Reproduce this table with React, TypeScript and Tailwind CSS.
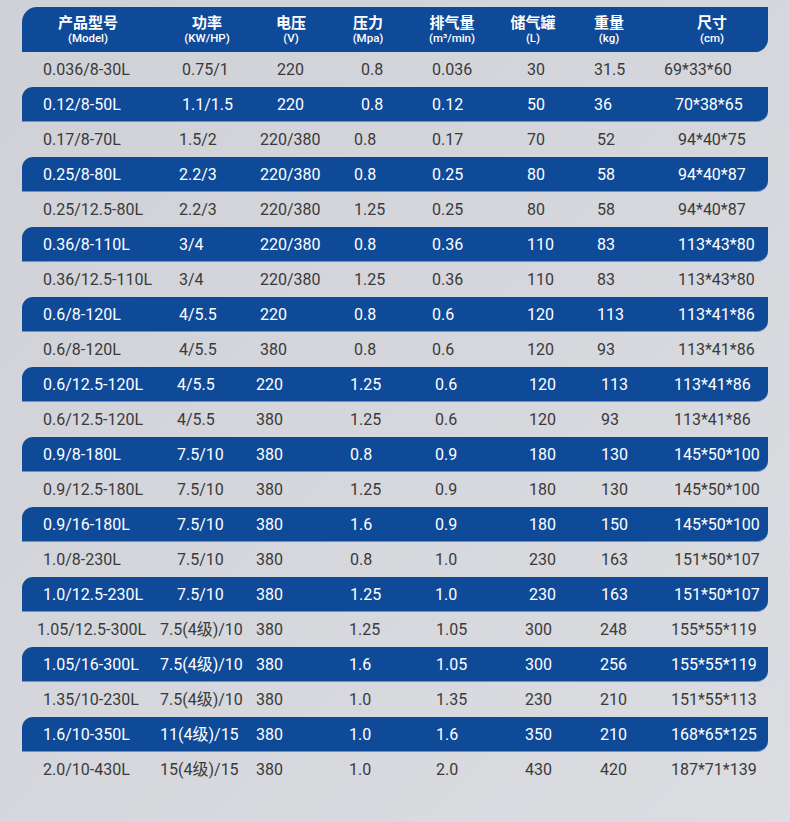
import React from "react";

type Row = { cells: string[]; blue: boolean; t: string; first?: string; last?: string };

const T1 = "grid-cols-[139px_95px_84px_71px_95px_67px_76px_1fr]";
const T2 = "grid-cols-[136px_81px_94px_78px_95px_70px_81px_1fr]";
const T3 = "grid-cols-[134px_79px_94px_85px_94px_72px_73px_1fr]";
const T4 = "grid-cols-[117px_96px_93px_87px_89px_75px_71px_1fr]";

const rows: Row[] = [
  { cells: ["0.036/8-30L", "0.75/1", "220", "0.8", "0.036", "30", "31.5", "69*33*60"], blue: false, t: T1, last: "-ml-[6px]" },
  { cells: ["0.12/8-50L", "1.1/1.5", "220", "0.8", "0.12", "50", "36", "70*38*65"], blue: true, t: T1, last: "ml-[5px]" },
  { cells: ["0.17/8-70L", "1.5/2", "220/380", "0.8", "0.17", "70", "52", "94*40*75"], blue: false, t: T2 },
  { cells: ["0.25/8-80L", "2.2/3", "220/380", "0.8", "0.25", "80", "58", "94*40*87"], blue: true, t: T2 },
  { cells: ["0.25/12.5-80L", "2.2/3", "220/380", "1.25", "0.25", "80", "58", "94*40*87"], blue: false, t: T2 },
  { cells: ["0.36/8-110L", "3/4", "220/380", "0.8", "0.36", "110", "83", "113*43*80"], blue: true, t: T2 },
  { cells: ["0.36/12.5-110L", "3/4", "220/380", "1.25", "0.36", "110", "83", "113*43*80"], blue: false, t: T2 },
  { cells: ["0.6/8-120L", "4/5.5", "220", "0.8", "0.6", "120", "113", "113*41*86"], blue: true, t: T2 },
  { cells: ["0.6/8-120L", "4/5.5", "380", "0.8", "0.6", "120", "93", "113*41*86"], blue: false, t: T2 },
  { cells: ["0.6/12.5-120L", "4/5.5", "220", "1.25", "0.6", "120", "113", "113*41*86"], blue: true, t: T3 },
  { cells: ["0.6/12.5-120L", "4/5.5", "380", "1.25", "0.6", "120", "93", "113*41*86"], blue: false, t: T3 },
  { cells: ["0.9/8-180L", "7.5/10", "380", "0.8", "0.9", "180", "130", "145*50*100"], blue: true, t: T3 },
  { cells: ["0.9/12.5-180L", "7.5/10", "380", "1.25", "0.9", "180", "130", "145*50*100"], blue: false, t: T3 },
  { cells: ["0.9/16-180L", "7.5/10", "380", "1.6", "0.9", "180", "150", "145*50*100"], blue: true, t: T3 },
  { cells: ["1.0/8-230L", "7.5/10", "380", "0.8", "1.0", "230", "163", "151*50*107"], blue: false, t: T3 },
  { cells: ["1.0/12.5-230L", "7.5/10", "380", "1.25", "1.0", "230", "163", "151*50*107"], blue: true, t: T3 },
  { cells: ["1.05/12.5-300L", "7.5(4级)/10", "380", "1.25", "1.05", "300", "248", "155*55*119"], blue: false, t: T4, first: "-ml-[6px]" },
  { cells: ["1.05/16-300L", "7.5(4级)/10", "380", "1.6", "1.05", "300", "256", "155*55*119"], blue: true, t: T4 },
  { cells: ["1.35/10-230L", "7.5(4级)/10", "380", "1.0", "1.35", "230", "210", "151*55*113"], blue: false, t: T4 },
  { cells: ["1.6/10-350L", "11(4级)/15", "380", "1.0", "1.6", "350", "210", "168*65*125"], blue: true, t: T4 },
  { cells: ["2.0/10-430L", "15(4级)/15", "380", "1.0", "2.0", "430", "420", "187*71*139"], blue: false, t: T4 },
];

const headers: [string, string][] = [
  ["产品型号", "(Model)"],
  ["功率", "(KW/HP)"],
  ["电压", "(V)"],
  ["压力", "(Mpa)"],
  ["排气量", "(m³/min)"],
  ["储气罐", "(L)"],
  ["重量", "(kg)"],
  ["尺寸", "(cm)"],
];

const FONT = "font-['Roboto','Noto_Sans_CJK_SC',sans-serif]";

export default function App() {
  return (
    <div
      className={`w-[790px] h-[822px] overflow-hidden bg-gradient-to-br from-[#cfd1d6] via-[#d5d7dc] to-[#dcdde1] pt-[7px] ${FONT}`}
    >
      <div className="ml-[22px] w-[746px]">
        <div className="h-[45px] bg-[#0f4a98] rounded-tl-[15px] rounded-br-[13px] grid grid-cols-[132px_106px_62px_92px_76px_86px_66px_1fr] text-white">
          {headers.map(([zh, en], i) => (
            <div
              key={i}
              className={`flex flex-col items-center justify-center ${i === 7 ? "pl-[14px]" : ""}`}
            >
              <div className="text-[15px] leading-[17px] font-bold font-['Noto_Sans_CJK_SC',sans-serif] mt-[-1px]">
                {zh}
              </div>
              <div className="text-[11.5px] leading-[13px] font-medium font-['Roboto',sans-serif] mt-[2px]">{en}</div>
            </div>
          ))}
        </div>
        {rows.map((r, ri) => (
          <div
            key={ri}
            className={`h-[35px] grid ${r.t} pl-[21px] items-center text-[16px] ${
              r.blue
                ? "bg-[#0f4a98] text-white rounded-tl-[11px] rounded-br-[11px] border-b border-b-[#6a92c8] pt-[1px]"
                : "text-[#3a3a3a]"
            }`}
          >
            {r.cells.map((c, ci) => (
              <div
                key={ci}
                className={`whitespace-nowrap ${ci === 0 && r.first ? r.first : ""} ${ci === 7 && r.last ? r.last : ""}`}
              >
                {c}
              </div>
            ))}
          </div>
        ))}
      </div>
    </div>
  );
}
